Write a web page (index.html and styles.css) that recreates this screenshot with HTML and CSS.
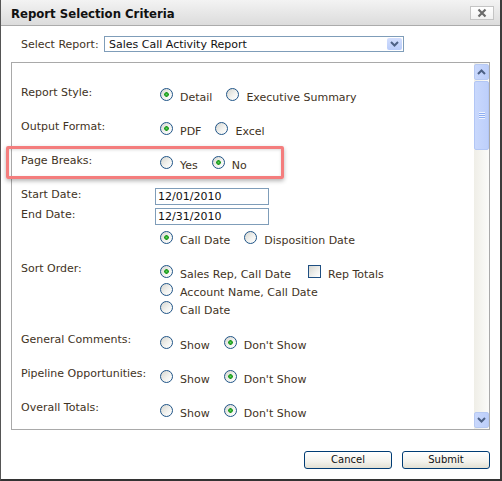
FILE: index.html
```html
<!DOCTYPE html>
<html>
<head>
<meta charset="utf-8">
<link rel="stylesheet" href="styles.css">
</head>
<body>
<div class="dialog">
  <div class="titlebar">
    <span class="title">Report Selection Criteria</span>
    <span class="close"><svg width="10" height="10" viewBox="0 0 10 10"><path d="M1.5 1.5 L8.5 8.5 M8.5 1.5 L1.5 8.5" stroke="#6b6b6b" stroke-width="2.2" fill="none"/></svg></span>
  </div>
  <div class="body">
    <div class="select-row">
      <span class="sel-label">Select Report:</span>
      <div class="select">
        <span class="sel-text">Sales Call Activity Report</span>
        <span class="sel-btn"><svg width="9" height="6" viewBox="0 0 9 6"><path d="M1 1 L4.5 4.5 L8 1" stroke="#4d6185" stroke-width="2" fill="none"/></svg></span>
      </div>
    </div>
    <div class="pane">
      <div class="pane-content">
        <div class="row">
          <div class="lbl">Report Style:</div>
          <div class="ctl"><span class="opt"><span class="rd on"></span>Detail</span><span class="opt"><span class="rd"></span>Executive Summary</span></div>
        </div>
        <div class="row">
          <div class="lbl">Output Format:</div>
          <div class="ctl"><span class="opt"><span class="rd on"></span>PDF</span><span class="opt"><span class="rd"></span>Excel</span></div>
        </div>
        <div class="row">
          <div class="lbl">Page Breaks:</div>
          <div class="ctl"><span class="opt"><span class="rd"></span>Yes</span><span class="opt"><span class="rd on"></span>No</span></div>
        </div>
        <div class="row date">
          <div class="lbl">Start Date:</div>
          <div class="ctl flat"><span class="input">12/01/2010</span></div>
        </div>
        <div class="row date2">
          <div class="lbl">End Date:</div>
          <div class="ctl flat"><span class="input">12/31/2010</span></div>
        </div>
        <div class="row sub">
          <div class="lbl"></div>
          <div class="ctl flat"><span class="opt"><span class="rd on"></span>Call Date</span><span class="opt"><span class="rd"></span>Disposition Date</span></div>
        </div>
        <div class="row sort">
          <div class="lbl">Sort Order:</div>
          <div class="ctl low">
            <div class="line"><span class="opt"><span class="rd on"></span>Sales Rep, Call Date</span><span class="opt"><span class="cb"></span>Rep Totals</span></div>
            <div class="line"><span class="opt"><span class="rd"></span>Account Name, Call Date</span></div>
            <div class="line"><span class="opt"><span class="rd"></span>Call Date</span></div>
          </div>
        </div>
        <div class="row">
          <div class="lbl">General Comments:</div>
          <div class="ctl low"><span class="opt"><span class="rd"></span>Show</span><span class="opt"><span class="rd on"></span>Don't Show</span></div>
        </div>
        <div class="row">
          <div class="lbl">Pipeline Opportunities:</div>
          <div class="ctl low"><span class="opt"><span class="rd"></span>Show</span><span class="opt"><span class="rd on"></span>Don't Show</span></div>
        </div>
        <div class="row">
          <div class="lbl">Overall Totals:</div>
          <div class="ctl low"><span class="opt"><span class="rd"></span>Show</span><span class="opt"><span class="rd on"></span>Don't Show</span></div>
        </div>
      </div>
      <div class="sb">
        <div class="sb-btn"><svg width="9" height="6" viewBox="0 0 9 6"><path d="M1 5 L4.5 1.5 L8 5" stroke="#4d6185" stroke-width="2" fill="none"/></svg></div>
        <div class="sb-thumb"><span class="grip"></span></div>
        <div class="sb-btn down"><svg width="9" height="6" viewBox="0 0 9 6"><path d="M1 1 L4.5 4.5 L8 1" stroke="#4d6185" stroke-width="2" fill="none"/></svg></div>
      </div>
    </div>
    <div class="buttons">
      <button class="btn">Cancel</button>
      <button class="btn">Submit</button>
    </div>
  </div>
  <div class="highlight"></div>
</div>
</body>
</html>
```

FILE: styles.css
```css
html, body {
  margin: 0;
  padding: 0;
  background: #fff;
}
body {
  font-family: "DejaVu Sans", Verdana, sans-serif;
  font-size: 11px;
  line-height: 13px;
  color: #3f3324;
}
.dialog {
  position: relative;
  width: 502px;
  height: 481px;
  box-sizing: border-box;
  border-left: 1px solid #555;
  border-right: 2px solid #3c3c3c;
  border-bottom: 2px solid #333;
  background: #fff;
  display: flex;
  flex-direction: column;
}
.titlebar {
  height: 25px;
  flex: none;
  border-bottom: 1px solid #ababab;
  background: linear-gradient(#f3f3f3, #dcdcdc);
  display: flex;
  align-items: center;
  justify-content: space-between;
  padding: 0 6px 0 10px;
}
.title {
  font-family: "DejaVu Sans Condensed", "DejaVu Sans", sans-serif;
  font-stretch: condensed;
  font-weight: bold;
  font-size: 13px;
  line-height: 15px;
  color: #111;
  padding-top: 1px;
}
.close {
  width: 24px;
  height: 14px;
  box-sizing: border-box;
  border: 1px solid #c4c4c4;
  background: linear-gradient(#ffffff, #f1f1f1);
  display: flex;
  align-items: center;
  justify-content: center;
}
.close svg { display: block; }
.body {
  flex: 1;
  padding: 10px 10px 0 10px;
  display: flex;
  flex-direction: column;
}
.select-row {
  display: flex;
  align-items: center;
  height: 16px;
  padding-left: 10px;
}
.sel-label {
  width: 83px;
  flex: none;
}
.select {
  width: 300px;
  height: 16px;
  box-sizing: border-box;
  border: 1px solid #7f9db9;
  display: flex;
  align-items: center;
  justify-content: space-between;
  padding: 0 1px 0 4px;
  color: #111;
}
.sel-text { padding-top: 1px; }
.sel-btn {
  width: 15px;
  height: 12px;
  border-radius: 2px;
  background: linear-gradient(#d3defd, #b9ccfa);
  display: flex;
  align-items: center;
  justify-content: center;
}
.sel-btn svg { display: block; }
.pane {
  margin-top: 10px;
  height: 368px;
  flex: none;
  box-sizing: border-box;
  border: 1px solid #a9a9a9;
  display: flex;
}
.pane-content {
  flex: 1;
  overflow: hidden;
  padding: 23px 0 0 9px;
}
.row {
  display: grid;
  grid-template-columns: 134px 1fr;
  height: 34px;
}
.row.date { height: 20px; }
.row.date2 { height: 26px; }
.row.sub { height: 28px; }
.row.sort { height: 71px; }
.ctl { padding-top: 5px; white-space: nowrap; }
.ctl.low { padding-top: 6px; }
.ctl.flat { padding-top: 0; }
.line { height: 18px; }
.opt { margin-right: 9px; }
.rd {
  display: inline-block;
  width: 13px;
  height: 13px;
  box-sizing: border-box;
  border: 1px solid #1f5487;
  border-radius: 50%;
  background: linear-gradient(135deg, #d6d6d0 0%, #f4f4f1 60%, #ffffff 100%);
  margin: -3px 7px 0 5px;
}
.rd.on {
  background:
    radial-gradient(circle, #5fd35f 0, #2aa82a 1.2px, #1f981f 2px, rgba(31,152,31,0) 2.6px),
    linear-gradient(135deg, #d6d6d0 0%, #f4f4f1 60%, #ffffff 100%);
}
.cb {
  display: inline-block;
  width: 13px;
  height: 13px;
  box-sizing: border-box;
  border: 1px solid #1f4f82;
  background: linear-gradient(135deg, #d6d6d0 0%, #f1f1ee 60%, #ffffff 100%);
  margin: -3px 7px 0 8px;
}
.input {
  display: block;
  width: 114px;
  height: 17px;
  box-sizing: border-box;
  border: 1px solid #7f9db9;
  padding: 1px 0 0 2px;
  color: #111;
  line-height: 14px;
}
.sb {
  width: 15px;
  flex: none;
  padding: 1px 0;
  display: flex;
  flex-direction: column;
  background: linear-gradient(to right, #efeee7, #fbfbf9);
}
.sb-btn {
  height: 16px;
  box-sizing: border-box;
  border: 1px solid #b7c9f2;
  border-radius: 2px;
  background: linear-gradient(to right, #c9d8fc, #bccefa);
  display: flex;
  align-items: center;
  justify-content: center;
}
.sb-btn svg { display: block; }
.sb-btn.down { margin-top: auto; }
.sb-thumb {
  margin-top: 1px;
  height: 69px;
  box-sizing: border-box;
  border: 1px solid #b2c6f5;
  border-radius: 2px;
  background: linear-gradient(to right, #c9d8fc, #bdcffb);
  display: flex;
  align-items: center;
  justify-content: center;
}
.grip {
  width: 6px;
  height: 7px;
  background: repeating-linear-gradient(#eef3fe 0 1px, #8eaef3 1px 2px);
}
.buttons {
  margin-top: 21px;
  display: flex;
  justify-content: flex-end;
  gap: 10px;
}
.btn {
  width: 88px;
  height: 18px;
  box-sizing: border-box;
  border: 1px solid #003c74;
  border-radius: 3px;
  background: linear-gradient(#ffffff, #f3f2ec 60%, #e3e0d3);
  font-family: "DejaVu Sans", Verdana, sans-serif;
  font-size: 10px;
  line-height: 14px;
  color: #111;
  padding: 0;
  margin: 0;
}
.highlight {
  position: absolute;
  left: 5px;
  top: 146px;
  width: 278px;
  height: 33px;
  box-sizing: border-box;
  border: 3px solid #f47d7d;
  border-radius: 2px;
  box-shadow: 0 2px 4px rgba(0,0,0,0.3), inset 0 1px 3px rgba(0,0,0,0.15);
}
```
